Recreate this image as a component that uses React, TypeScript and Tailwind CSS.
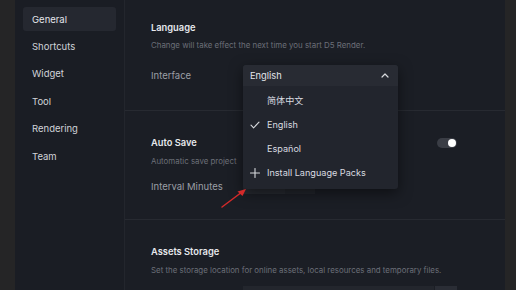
import React from "react";

const navItems = ["General", "Shortcuts", "Widget", "Tool", "Rendering", "Team"];

function Toggle() {
  return (
    <div className="relative h-[10px] w-[20px] rounded-full bg-[#3a3d45]">
      <div className="absolute right-[1px] top-[1px] h-[8px] w-[8px] rounded-full bg-white" />
    </div>
  );
}

export default function App() {
  return (
    <div
      className="flex h-[290px] w-[516px] overflow-hidden bg-[#252526] text-[#d7d9de]"
      style={{ fontFamily: "Inter, 'Noto Sans CJK SC', sans-serif" }}
    >
      <div className="w-[15px] shrink-0 bg-[#252526]" />
      {/* Sidebar */}
      <div className="flex w-[109px] shrink-0 flex-col gap-[3px] bg-[#1a1d24] px-[8px] pt-[7px]">
        {navItems.map((item, i) => (
          <div
            key={item}
            className={`flex h-[24.4px] shrink-0 items-center rounded-[3px] pl-[9px] pt-[1px] text-[9.5px] ${
              i === 0 ? "bg-[#252830] text-[#e3e5ea]" : "text-[#d0d3d9]"
            }`}
          >
            {item}
          </div>
        ))}
      </div>
      <div className="w-[1px] shrink-0 bg-[#23262d]" />
      {/* Main */}
      <div className="relative flex w-[380px] shrink-0 flex-col bg-[#1b1e25]">
        {/* Language */}
        <div className="h-[111px] shrink-0 border-b border-[#272a31] pl-[26px] pt-[21px]">
          <div className="text-[9.3px] font-semibold text-[#e6e8ec]">Language</div>
          <div className="mt-[5px] text-[7.9px] text-[#6b6f78]">
            Change will take effect the next time you start D5 Render.
          </div>
          <div className="mt-[17px] flex items-center">
            <div className="w-[92px] text-[9.5px] text-[#9b9ea6]">Interface</div>
          </div>
        </div>
        {/* Auto save */}
        <div className="h-[109px] shrink-0 border-b border-[#272a31] pl-[26px] pt-[25px]">
          <div className="flex items-center justify-between pr-[48px]">
            <div className="text-[9.3px] font-semibold text-[#e6e8ec]">Auto Save</div>
            <Toggle />
          </div>
          <div className="mt-[6px] flex justify-between pr-[122px] text-[7.9px] text-[#6b6f78]">
            <span>Automatic save project</span>
            <span>u file.</span>
          </div>
          <div className="mt-[12px] flex items-center">
            <div className="w-[92px] text-[9.5px] text-[#9b9ea6]">Interval Minutes</div>
            <div className="flex h-[11px] self-end">
              <div className="w-[42px] bg-[#272a31]" />
              <div className="w-[30px] bg-[#22252c]" />
            </div>
          </div>
        </div>
        {/* Assets storage */}
        <div className="flex-1 shrink-0 pl-[26px] pt-[25px]">
          <div className="text-[9.3px] font-semibold text-[#e6e8ec]">Assets Storage</div>
          <div className="mt-[6px] text-[7.9px] text-[#6b6f78]">
            Set the storage location for online assets, local resources and temporary files.
          </div>
          <div className="mt-[9px] ml-[92px] flex w-[214px] gap-[1px]">
            <div className="h-[20px] flex-1 bg-[#23262d]" />
            <div className="h-[20px] w-[22px] bg-[#2a2d35]" />
          </div>
        </div>

        {/* Dropdown overlay */}
        <div className="absolute left-[118px] top-[65px] w-[155px] overflow-hidden rounded-[3px] bg-[#22252d] shadow-[0_4px_14px_rgba(0,0,0,0.5)]">
          <div className="flex h-[21px] items-center justify-between bg-[#282b33] pl-[7px] pr-[9px] text-[9.3px] text-[#e3e5ea]">
            <span>English</span>
            <svg width="8" height="5" viewBox="0 0 8 5" fill="none">
              <path d="M1 4L4 1L7 4" stroke="#d8dade" strokeWidth="1.2" strokeLinecap="round" strokeLinejoin="round" />
            </svg>
          </div>
          <div className="flex flex-col pb-[4px] pt-[3px] text-[9.1px] text-[#d9dbe0]">
            <div className="flex h-[24px] items-center pl-[24px]">简体中文</div>
            <div className="relative flex h-[24px] items-center pl-[24px]">
              <svg className="absolute left-[7px] top-[8px]" width="10" height="8" viewBox="0 0 10 8" fill="none">
                <path d="M1 4.2L3.6 6.8L9 1.2" stroke="#d8dade" strokeWidth="1.1" strokeLinecap="round" strokeLinejoin="round" />
              </svg>
              English
            </div>
            <div className="flex h-[24px] items-center pl-[24px]">Español</div>
            <div className="relative flex h-[24px] items-center pl-[24px]">
              <svg className="absolute left-[7px] top-[7px]" width="10" height="10" viewBox="0 0 10 10" fill="none">
                <path d="M5 0.5V9.5M0.5 5H9.5" stroke="#d8dade" strokeWidth="1.1" strokeLinecap="round" />
              </svg>
              Install Language Packs
            </div>
          </div>
        </div>

        {/* Red arrow */}
        <svg className="absolute left-[94px] top-[185px]" width="30" height="26" viewBox="0 0 30 26" fill="none">
          <path d="M3 22L23 7" stroke="#d42a2a" strokeWidth="1.5" strokeLinecap="round" />
          <path d="M27 4L18.5 6.5L23.5 11Z" fill="#d42a2a" />
        </svg>
      </div>
      <div className="flex-1 bg-[#252526]" />
    </div>
  );
}
